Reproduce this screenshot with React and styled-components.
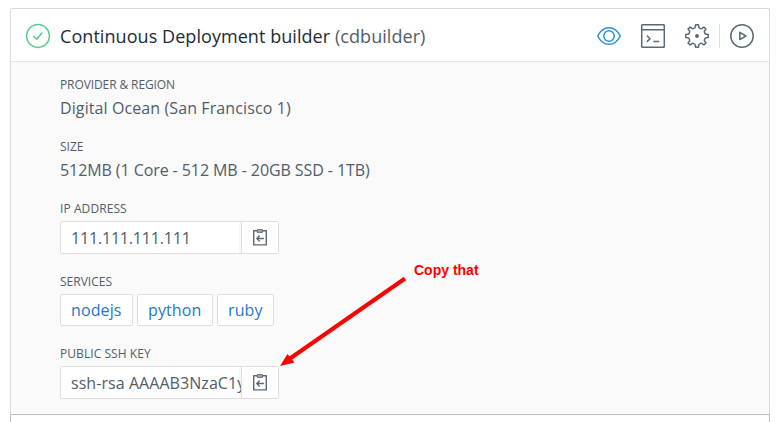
import React from "react";
import styled, { createGlobalStyle } from "styled-components";

const GlobalStyle = createGlobalStyle`
  * { box-sizing: border-box; }
  html, body { margin: 0; background: #fff; overflow: hidden; }
  body { font-family: "Open Sans", sans-serif; color: #515d6a; }
`;

const Page = styled.main`
  position: relative;
  width: 783px;
  height: 422px;
  overflow: hidden;
  padding: 8px 13px 0 10px;
`;

const Card = styled.section`
  height: 406px;
  border: 1px solid #d9dbdd;
  border-bottom: 0;
  border-radius: 2px 2px 0 0;
  background: #fafafa;
`;

const NextCard = styled.section`
  height: 20px;
  border: 1px solid #bcbfc4;
  background: #fff;
`;

const Header = styled.header`
  display: flex;
  align-items: center;
  height: 53px;
  padding: 2px 15px 0 14px;
  border-bottom: 1px solid #e6e7e8;
  border-radius: 2px 2px 0 0;
  background: #fff;
`;

const Title = styled.h1`
  flex: 1;
  margin: 0 0 0 9px;
  font-size: 18px;
  line-height: 26px;
  font-weight: 400;
  letter-spacing: 0.06px;
  color: #1b2b37;
  white-space: nowrap;
`;

const Alias = styled.span`
  color: #515d6a;
`;

const Icon = styled.svg`
  display: block;
  flex: none;
  fill: none;
  stroke: ${(p) => p.$color || "#596a76"};
  stroke-width: ${(p) => p.$weight || 1.5};
  stroke-linecap: round;
  stroke-linejoin: round;
`;

const Actions = styled.div`
  display: flex;
  align-items: center;
  gap: 20px;
`;

const RunAction = styled.div`
  display: flex;
  margin-left: -10px;
  padding-left: 10px;
  border-left: 1px solid #dcdfe1;
`;

const Details = styled.div`
  display: flex;
  flex-direction: column;
  gap: 20px;
  padding: 15px 0 0 49px;
`;

const Field = styled.div`
  display: flex;
  flex-direction: column;
  gap: 4px;
`;

const Label = styled.div`
  font-size: 12px;
  line-height: 16px;
  letter-spacing: ${(p) => p.$spacing || "0"};
  text-transform: uppercase;
`;

const Value = styled.div`
  font-size: 16px;
  line-height: 22px;
  letter-spacing: ${(p) => p.$spacing || "0"};
`;

const CopyBox = styled.div`
  display: flex;
  width: 219px;
  height: 33px;
  border: 1px solid #dcdee0;
  border-radius: 2px;
  background: #fff;
`;

const CopyText = styled.div`
  flex: 1;
  min-width: 0;
  overflow: hidden;
  padding-left: 10px;
  background: linear-gradient(to left, #f7f7f7 2px, #fff 2px);
  font-size: 16px;
  line-height: 32px;
  letter-spacing: ${(p) => p.$spacing || "0"};
  white-space: nowrap;
`;

const CopyButton = styled.button`
  display: flex;
  align-items: center;
  justify-content: center;
  width: 37px;
  padding: 0;
  border: 0;
  border-left: 1px solid #dcdee0;
  background: #fff;
`;

const Tags = styled.div`
  display: flex;
  gap: 4px;
`;

const Tag = styled.a`
  width: ${(p) => p.$width}px;
  height: 32px;
  padding-left: 10px;
  border: 1px solid #dcdee0;
  border-radius: 2px;
  background: #fff;
  color: #1f78cc;
  font-size: 16px;
  line-height: 30px;
  letter-spacing: 0.12px;
`;

const Callout = styled.div`
  position: absolute;
  left: 414px;
  top: 262px;
  color: #f00;
  font: bold 14px/16px "Liberation Sans", sans-serif;
`;

const Arrow = styled.svg`
  position: absolute;
  left: 270px;
  top: 270px;
`;

const CheckIcon = () => (
  <Icon width="26" height="26" viewBox="0 0 26 26" $color="#55cb8c">
    <circle cx="13" cy="13" r="11.4" />
    <path d="M8.500 13.300l3.200 3 5.200-6.300" />
  </Icon>
);

const EyeIcon = () => (
  <Icon width="24" height="24" viewBox="0 0 24 24" $color="#2b91d8">
    <path d="M.7 12C3.400 6.500 7.300 3.700 12 3.700S20.600 6.500 23.300 12C20.600 17.500 16.700 20.300 12 20.300S3.400 17.500.7 12Z" />
    <circle cx="12" cy="12" r="5.200" />
  </Icon>
);

const TerminalIcon = () => (
  <Icon width="24" height="24" viewBox="0 0 24 24">
    <rect x=".7" y=".7" width="22.600" height="22.600" rx="1.200" />
    <path d="M1 5.700h22M6.300 12l2.700 2.700-2.700 2.700M13 17.500h4.600" />
  </Icon>
);

// Eight rounded teeth joined by U-shaped valleys.
const gearPath = (() => {
  const pts = [];
  const point = (r, a) =>
    `${(12 + r * Math.sin(a)).toFixed(2)} ${(12 - r * Math.cos(a)).toFixed(2)}`;
  const step = Math.PI / 4;
  for (let i = 0; i < 8; i += 1) {
    const a = i * step;
    pts.push(`${i ? "L" : "M"}${point(11.3, a - 0.13)}`);
    pts.push(`L${point(11.3, a + 0.13)}`);
    pts.push(`L${point(9.5, a + 0.18)}`);
    pts.push(
      `C${point(8, a + 0.22)} ${point(8, a + step - 0.22)} ${point(9.5, a + step - 0.18)}`
    );
  }
  return `${pts.join("")}Z`;
})();

const GearIcon = () => (
  <Icon width="24" height="24" viewBox="0 0 24 24">
    <path d={gearPath} />
    <circle cx="12" cy="12" r="1.200" fill="#596a76" />
  </Icon>
);

const PlayIcon = () => (
  <Icon width="24" height="24" viewBox="0 0 24 24">
    <circle cx="12" cy="12" r="11.200" />
    <path d="M9.800 8.400v7.200l6-3.600Z" />
  </Icon>
);

const ClipboardIcon = () => (
  <Icon width="14" height="17" viewBox="0 0 14 17" $weight={1.4}>
    <path d="M4 1.700H.7v14.200h12.600V1.700H10" />
    <path d="M4.500.7h5v2.600h-5Z" fill="#a5afb6" strokeWidth="1" />
    <path d="M10.500 9.500H4M6.300 7L3.800 9.500 6.300 12" />
  </Icon>
);

const CopyField = ({ label, value, spacing, labelSpacing }) => (
  <Field>
    <Label $spacing={labelSpacing}>{label}</Label>
    <CopyBox>
      <CopyText $spacing={spacing}>{value}</CopyText>
      <CopyButton aria-label={`Copy ${label}`}>
        <ClipboardIcon />
      </CopyButton>
    </CopyBox>
  </Field>
);

export default function App() {
  return (
    <Page>
      <GlobalStyle />
      <Card>
        <Header>
          <CheckIcon />
          <Title>
            Continuous Deployment builder <Alias>(cdbuilder)</Alias>
          </Title>
          <Actions>
            <EyeIcon />
            <TerminalIcon />
            <GearIcon />
            <RunAction>
              <PlayIcon />
            </RunAction>
          </Actions>
        </Header>
        <Details>
          <Field>
            <Label $spacing="-0.1px">Provider &amp; Region</Label>
            <Value $spacing="0.1px">Digital Ocean (San Francisco 1)</Value>
          </Field>
          <Field>
            <Label>Size</Label>
            <Value $spacing="-0.08px">512MB (1 Core - 512 MB - 20GB SSD - 1TB)</Value>
          </Field>
          <CopyField
            label="IP Address"
            value="111.111.111.111"
            spacing="-0.18px"
            labelSpacing="0.08px"
          />
          <Field>
            <Label>Services</Label>
            <Tags>
              <Tag $width={73}>nodejs</Tag>
              <Tag $width={76}>python</Tag>
              <Tag $width={57}>ruby</Tag>
            </Tags>
          </Field>
          <CopyField
            label="Public SSH Key"
            value="ssh-rsa AAAAB3NzaC1y"
            spacing="0.06px"
            labelSpacing="0.06px"
          />
        </Details>
      </Card>
      <NextCard />
      <Callout>Copy that</Callout>
      <Arrow width="140" height="100" viewBox="0 0 140 100">
        <path d="M135 8.500L20 88.500" stroke="#f00" strokeWidth="4" fill="none" />
        <path d="M10 96L17.500 84L24.500 92.500Z" fill="#f00" />
      </Arrow>
    </Page>
  );
}
